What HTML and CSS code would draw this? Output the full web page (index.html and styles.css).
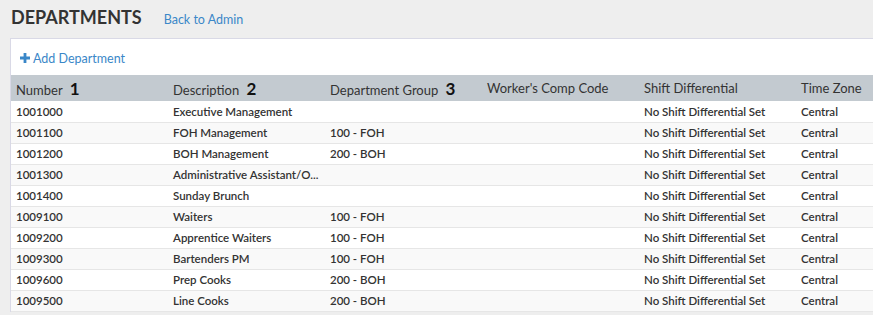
FILE: index.html
```html
<!DOCTYPE html>
<html lang="en">
<head>
    <meta charset="UTF-8">
    <title>Departments</title>
    <link rel="stylesheet" href="styles.css">
</head>
<body>
    <div class="page-header">
        <h1>DEPARTMENTS</h1>
        <a class="back-link" href="#">Back to Admin</a>
    </div>

    <div class="panel">
        <div class="toolbar">
            <a class="add-link" href="#">
                <svg class="plus" viewBox="0 0 10 10" width="10" height="10"><path d="M3.6 0h2.8v3.6H10v2.8H6.4V10H3.6V6.4H0V3.6h3.6z" fill="#3a87c8"/></svg>
                Add Department
            </a>
        </div>

        <table class="dept-table">
            <thead>
                <tr>
                    <th>Number <span class="num">1</span></th>
                    <th>Description <span class="num">2</span></th>
                    <th>Department Group <span class="num">3</span></th>
                    <th>Worker's Comp Code</th>
                    <th>Shift Differential</th>
                    <th>Time Zone</th>
                </tr>
            </thead>
            <tbody>
                <tr><td>1001000</td><td>Executive Management</td><td></td><td></td><td>No Shift Differential Set</td><td>Central</td></tr>
                <tr><td>1001100</td><td>FOH Management</td><td>100 - FOH</td><td></td><td>No Shift Differential Set</td><td>Central</td></tr>
                <tr><td>1001200</td><td>BOH Management</td><td>200 - BOH</td><td></td><td>No Shift Differential Set</td><td>Central</td></tr>
                <tr><td>1001300</td><td>Administrative Assistant/O...</td><td></td><td></td><td>No Shift Differential Set</td><td>Central</td></tr>
                <tr><td>1001400</td><td>Sunday Brunch</td><td></td><td></td><td>No Shift Differential Set</td><td>Central</td></tr>
                <tr><td>1009100</td><td>Waiters</td><td>100 - FOH</td><td></td><td>No Shift Differential Set</td><td>Central</td></tr>
                <tr><td>1009200</td><td>Apprentice Waiters</td><td>100 - FOH</td><td></td><td>No Shift Differential Set</td><td>Central</td></tr>
                <tr><td>1009300</td><td>Bartenders PM</td><td>100 - FOH</td><td></td><td>No Shift Differential Set</td><td>Central</td></tr>
                <tr><td>1009600</td><td>Prep Cooks</td><td>200 - BOH</td><td></td><td>No Shift Differential Set</td><td>Central</td></tr>
                <tr><td>1009500</td><td>Line Cooks</td><td>200 - BOH</td><td></td><td>No Shift Differential Set</td><td>Central</td></tr>
            </tbody>
        </table>
    </div>
</body>
</html>
```

FILE: styles.css
```css
* {
    margin: 0;
    padding: 0;
    box-sizing: border-box;
}

body {
    font-family: Lato, 'Open Sans', sans-serif;
    background: #eeeeee;
    color: #333;
    overflow: hidden;
}

.page-header {
    display: flex;
    align-items: baseline;
    height: 38px;
    padding: 6px 0 0 11px;
}

.page-header h1 {
    font-size: 18px;
    font-weight: bold;
    color: #333;
}

.back-link {
    margin-left: 22px;
    font-size: 12.5px;
    color: #3a87c8;
    text-decoration: none;
}

.panel {
    margin-left: 10px;
    width: 943px;
    background: white;
    border-top: 1px solid #d9d9e6;
    border-left: 1px solid #d9d9e6;
}

.toolbar {
    height: 36px;
    padding: 8px 0 0 9px;
}

.add-link {
    font-size: 12.5px;
    color: #3a87c8;
    text-decoration: none;
    display: inline-flex;
    align-items: center;
    gap: 3px;
}

.dept-table {
    border-collapse: collapse;
    table-layout: fixed;
    width: 942px;
}

.dept-table th {
    background: #c3cad0;
    height: 26px;
    text-align: left;
    font-size: 13px;
    font-weight: normal;
    color: #333;
    padding: 0 5px;
}

.dept-table th .num {
    font-size: 17px;
    font-weight: bold;
    color: #111;
    margin-left: 4px;
}

.dept-table td {
    height: 21px;
    padding: 0 5px;
    font-size: 11.5px;
    font-weight: 600;
    color: #333;
    border-bottom: 1px solid #e6e6e6;
    white-space: nowrap;
}

.dept-table tbody tr:nth-child(even) {
    background: #f9f9f9;
}
```
